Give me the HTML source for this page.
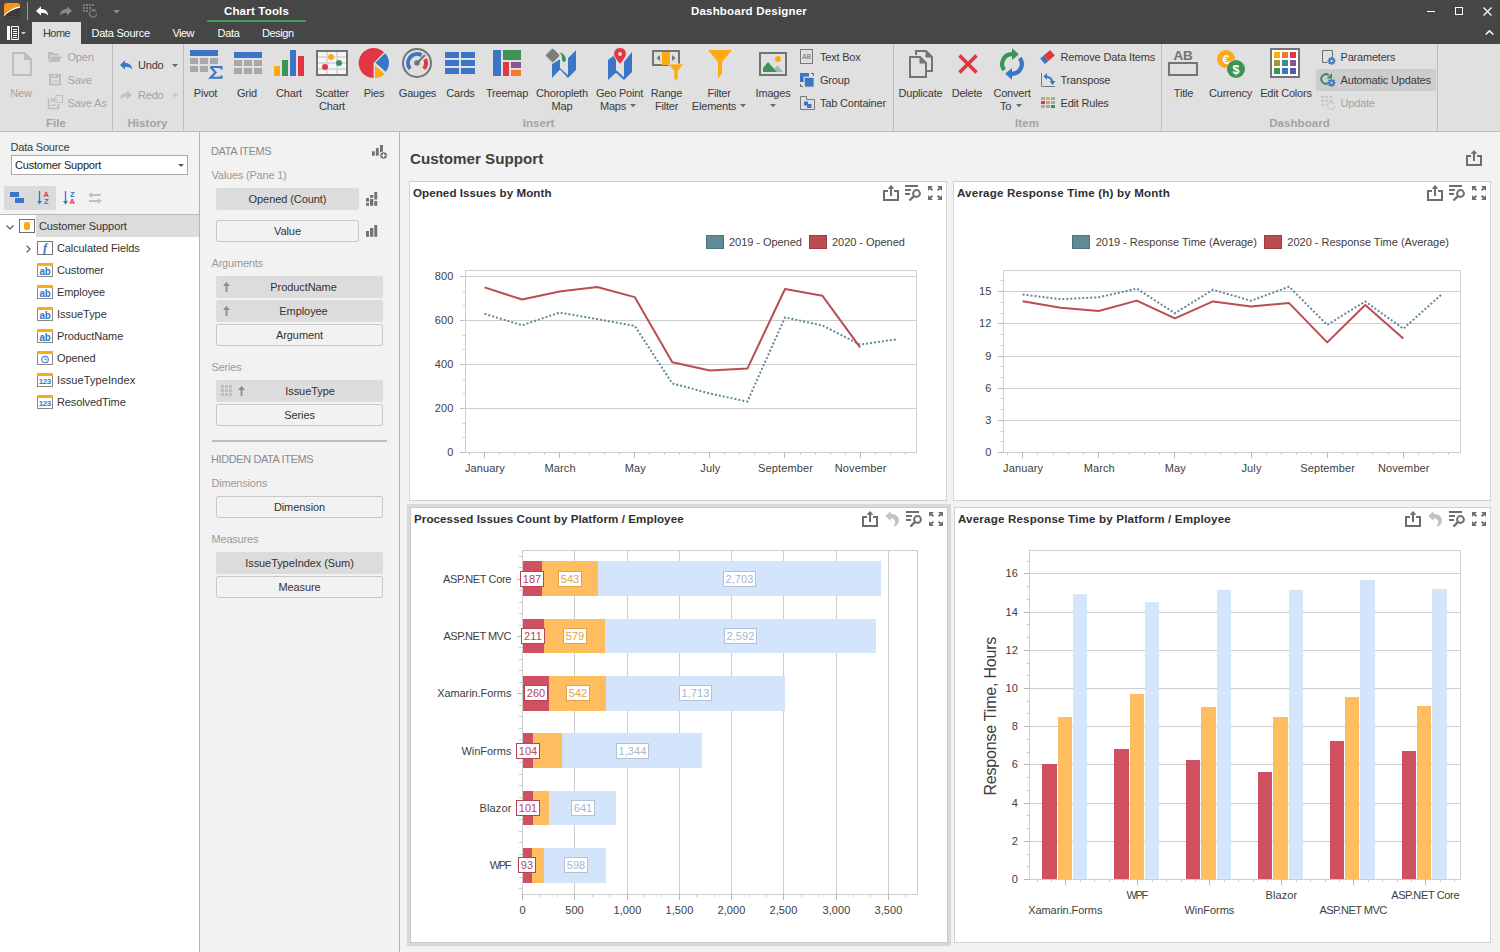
<!DOCTYPE html>
<html><head><meta charset="utf-8"><title>Dashboard Designer</title>
<style>
*{box-sizing:border-box;margin:0;padding:0}
html,body{width:1500px;height:952px;overflow:hidden;background:#f2f2f2}
body{font-family:"Liberation Sans",sans-serif;font-size:11px;color:#3a3a3a;position:relative;letter-spacing:-0.2px}
.a{position:absolute}
.t{position:absolute;white-space:nowrap;line-height:14px;height:14px}
.c{text-align:center}
.b{font-weight:bold;letter-spacing:0}
.w{color:#fff}
.dis{color:#a3a3a3}
.grp{position:absolute;white-space:nowrap;line-height:14px;height:14px;font-weight:bold;color:#a3a3a3;text-align:center;font-size:11.5px;letter-spacing:0.05px}
.sep{position:absolute;width:1px;background:#bdbdbd;top:44px;height:87px}
svg{position:absolute;overflow:visible}
.lbl{position:absolute;white-space:nowrap;line-height:13px;text-align:center;color:#3a3a3a}
.lbl.dis{color:#a3a3a3}
.di{position:absolute;height:22px;border-radius:2px;text-align:center;line-height:21px;color:#333;letter-spacing:-0.08px}
.di.f{background:#dcdcdc;line-height:23px}
.di.e{background:#f2f2f2;border:1px solid #c8c8c8;line-height:20px}
.sec{position:absolute;white-space:nowrap;color:#9a9a9a;line-height:14px}
.tr{position:absolute;white-space:nowrap;line-height:14px;color:#333;letter-spacing:-0.1px}
.pt{position:absolute;white-space:nowrap;font-weight:bold;color:#2f2f2f;line-height:14px;font-size:11.6px;letter-spacing:0.08px}
.panel{position:absolute;background:#fff;border:1px solid #d2d2d2}
.ax{font-family:"Liberation Sans",sans-serif;font-size:11px;fill:#404040;letter-spacing:0.12px}
</style></head><body>
<div class="a" style="left:0;top:0;width:1500px;height:44px;background:#464646"></div>
<svg style="left:4px;top:3px" width="16" height="16" viewBox="0 0 16 16">
<defs><clipPath id="ic"><rect x="0" y="0" width="16" height="16" rx="2.5"/></clipPath></defs>
<g clip-path="url(#ic)"><rect width="16" height="16" fill="#3b3b3b"/>
<path d="M0 0H16V3.2C9 4.5 3 8 0 12.2Z" fill="#f7941d"/>
<path d="M0 12.2C3 8 9 4.5 16 3.2V4.8C9.5 6 3.5 9.3 0 13.6Z" fill="#fff"/>
<rect x="1.5" y="13.2" width="13" height="1.2" fill="#4a4a4a"/></g></svg>
<div class="a" style="left:27px;top:2px;width:1px;height:18px;background:#9a9a9a"></div>
<svg style="left:36px;top:6px" width="12" height="10" viewBox="0 0 12 9.4"><path d="M0 4.6L5 0V2.8C9.5 2.8 12 5.2 12 9.4C10.8 7.2 8.8 6.4 5 6.4V9.2Z" fill="#fff"/></svg>
<svg style="left:60px;top:6px" width="12" height="10" viewBox="0 0 12 9.4"><path d="M0 4.6L5 0V2.8C9.5 2.8 12 5.2 12 9.4C10.8 7.2 8.8 6.4 5 6.4V9.2Z" fill="#8a8a8a" transform="translate(12,0) scale(-1,1)"/></svg>
<svg style="left:83px;top:4px" width="15" height="14" viewBox="0 0 15 14"><rect x="0" y="0" width="2" height="2" fill="#7d7d7d"/><rect x="3" y="0" width="2" height="2" fill="#7d7d7d"/><rect x="6" y="0" width="2" height="2" fill="#7d7d7d"/><rect x="9" y="0" width="2" height="2" fill="#7d7d7d"/><rect x="0" y="3" width="2" height="2" fill="#7d7d7d"/><rect x="3" y="3" width="2" height="2" fill="#7d7d7d"/><rect x="6" y="3" width="2" height="2" fill="#7d7d7d"/><rect x="0" y="6" width="2" height="2" fill="#7d7d7d"/><rect x="3" y="6" width="2" height="2" fill="#7d7d7d"/><path d="M13.6 9.4A3.6 3.6 0 1 1 11.2 6.2" fill="none" stroke="#7d7d7d" stroke-width="1.3"/><path d="M10.2 4.4L13.6 6.2L10.8 8.4Z" fill="#7d7d7d"/></svg>
<svg style="left:113px;top:10px" width="7" height="4" viewBox="0 0 7 4"><path d="M0 0H7L3.5 3.5Z" fill="#8e8e8e"/></svg>
<div class="t b w c" style="left:207px;top:4px;width:99px;font-size:11.5px;letter-spacing:.2px">Chart Tools</div>
<div class="a" style="left:207px;top:20px;width:99px;height:2px;background:#3c9d5a"></div>
<div class="t b w c" style="left:649px;top:4px;width:200px;font-size:11.5px;letter-spacing:.2px">Dashboard Designer</div>
<div class="a" style="left:1427px;top:11px;width:8px;height:1px;background:#fff"></div>
<div class="a" style="left:1455px;top:7px;width:8px;height:8px;border:1px solid #fff"></div>
<svg style="left:1483px;top:7px" width="9" height="9" viewBox="0 0 9 9"><path d="M0.5 0.5L8.5 8.5M8.5 0.5L0.5 8.5" stroke="#fff" stroke-width="1.2" fill="none"/></svg>
<svg style="left:1485px;top:30px" width="9" height="5" viewBox="0 0 9 5"><path d="M0.7 4.5L4.5 0.9L8.3 4.5" stroke="#fff" stroke-width="1.5" fill="none"/></svg>
<svg style="left:7px;top:26px" width="13" height="14" viewBox="0 0 13 14"><rect x="0" y="0" width="3" height="14" fill="#fff"/>
<path d="M4.5 0.5H11.5V13.5H4.5Z" fill="none" stroke="#fff" stroke-width="1"/>
<path d="M6 3.5H10M6 5.5H10M6 7.5H10M6 9.5H10M6 11.5H10" stroke="#fff" stroke-width="1" fill="none"/></svg>
<svg style="left:21px;top:32px" width="5" height="3" viewBox="0 0 5 3"><path d="M0 0H5L2.5 2.6Z" fill="#d0d0d0"/></svg>
<div class="a" style="left:32px;top:22px;width:49px;height:22px;background:#e0e0e0"></div>
<div class="t c" style="left:32px;top:26px;width:49px;color:#3a3a3a;letter-spacing:-0.55px">Home</div>
<div class="t w" style="left:91.5px;top:26px;letter-spacing:-0.26px">Data Source</div>
<div class="t w" style="left:172.5px;top:26px;letter-spacing:-0.55px">View</div>
<div class="t w" style="left:217.6px;top:26px;letter-spacing:-0.3px">Data</div>
<div class="t w" style="left:262px;top:26px;letter-spacing:-0.42px">Design</div>
<div class="a" style="left:0;top:44px;width:1500px;height:87px;background:#e0e0e0"></div>
<div class="a" style="left:0;top:131px;width:1500px;height:1px;background:#bcbcbc"></div>
<div class="sep" style="left:112px"></div>
<div class="sep" style="left:183px"></div>
<div class="sep" style="left:893px"></div>
<div class="sep" style="left:1161px"></div>
<div class="sep" style="left:1437px"></div>
<div class="grp" style="left:6px;top:116px;width:100px">File</div>
<div class="grp" style="left:97.5px;top:116px;width:100px">History</div>
<div class="grp" style="left:488.5px;top:116px;width:100px">Insert</div>
<div class="grp" style="left:977px;top:116px;width:100px">Item</div>
<div class="grp" style="left:1249.5px;top:116px;width:100px">Dashboard</div>
<svg style="left:12px;top:52px" width="20" height="24" viewBox="0 0 20 24"><path d="M1 1H12.5L19 7.5V23H1Z" fill="none" stroke="#bdbdbd" stroke-width="2"/><path d="M12 1V8H19" fill="#bdbdbd"/></svg>
<div class="lbl dis" style="left:-29px;top:87px;width:100px">New</div>
<svg style="left:48px;top:52px" width="14" height="10" viewBox="0 0 14 10"><path d="M0 0H4.5L6 1.5H11V3.5H2.8L0 9.5Z" fill="#bdbdbd"/><path d="M3.4 4.5H14L11 10H0.6Z" fill="#bdbdbd"/></svg>
<div class="t dis" style="left:67.5px;top:50px">Open</div>
<svg style="left:49px;top:74px" width="12" height="12" viewBox="0 0 12 12"><path d="M1 1H11V10.5H1Z" fill="none" stroke="#bdbdbd" stroke-width="2"/><rect x="3" y="0" width="6" height="4" fill="#bdbdbd"/><rect x="4.5" y="1" width="2" height="2" fill="#e0e0e0"/><rect x="3" y="6.5" width="6" height="1.2" fill="#bdbdbd"/></svg>
<div class="t dis" style="left:67.5px;top:73px">Save</div>
<svg style="left:48px;top:95px" width="15" height="14" viewBox="0 0 15 14"><path d="M0.5 3.5V13.5H10.5V9" fill="none" stroke="#bdbdbd" stroke-width="1.6"/><rect x="3" y="3" width="4" height="3.6" fill="#bdbdbd"/><rect x="4" y="4" width="1.6" height="1.6" fill="#e0e0e0"/><rect x="2.4" y="9.6" width="6" height="1.2" fill="#bdbdbd"/><rect x="8" y="0.5" width="6.5" height="7" fill="none" stroke="#bdbdbd" stroke-width="1"/></svg>
<div class="t dis" style="left:67.5px;top:96px">Save As</div>
<svg style="left:120px;top:60px" width="12" height="10" viewBox="0 0 12 9.4"><path d="M0 4.6L5 0V2.8C9.5 2.8 12 5.2 12 9.4C10.8 7.2 8.8 6.4 5 6.4V9.2Z" fill="#3a76c5"/></svg>
<div class="t" style="left:138px;top:58px">Undo</div>
<svg style="left:172px;top:64.3px" width="6" height="3.2" viewBox="0 0 6 3.2"><path d="M0 0H6L3 3.2Z" fill="#6a6a6a"/></svg>
<svg style="left:120px;top:90px" width="12" height="10" viewBox="0 0 12 9.4"><path d="M0 4.6L5 0V2.8C9.5 2.8 12 5.2 12 9.4C10.8 7.2 8.8 6.4 5 6.4V9.2Z" fill="#c0c0c0" transform="translate(12,0) scale(-1,1)"/></svg>
<div class="t dis" style="left:138px;top:88px">Redo</div>
<svg style="left:172px;top:94.3px" width="6" height="3.2" viewBox="0 0 6 3.2"><path d="M0 0H6L3 3.2Z" fill="#c2c2c2"/></svg>
<svg style="left:190px;top:48px" width="32" height="32" viewBox="0 0 32 32"><rect x="0" y="2" width="28" height="6" fill="#3a76c5" /><rect x="0" y="10" width="8" height="6" fill="#a9a9a9" /><rect x="10" y="10" width="8" height="6" fill="#a9a9a9" /><rect x="20" y="10" width="8" height="6" fill="#a9a9a9" /><rect x="0" y="18" width="8" height="6" fill="#a9a9a9" /><rect x="10" y="18" width="8" height="6" fill="#a9a9a9" /><path d="M20.5 19H31.5V21.4M31.5 27.6V29.8H20.5L25.6 24.4L20.5 19" fill="none" stroke="#3a76c5" stroke-width="2.1" stroke-linejoin="miter"/></svg>
<div class="lbl" style="left:155.5px;top:87px;width:100px">Pivot</div>
<svg style="left:234px;top:48px" width="32" height="32" viewBox="0 0 32 32"><rect x="0" y="4" width="28" height="6" fill="#3a76c5" /><rect x="0" y="12" width="8" height="6" fill="#a9a9a9" /><rect x="10" y="12" width="8" height="6" fill="#a9a9a9" /><rect x="20" y="12" width="8" height="6" fill="#a9a9a9" /><rect x="0" y="20" width="8" height="6" fill="#a9a9a9" /><rect x="10" y="20" width="8" height="6" fill="#a9a9a9" /><rect x="20" y="20" width="8" height="6" fill="#a9a9a9" /></svg>
<div class="lbl" style="left:197px;top:87px;width:100px">Grid</div>
<svg style="left:274px;top:48px" width="32" height="32" viewBox="0 0 32 32"><rect x="0" y="18" width="6" height="10" fill="#ffaa10" /><rect x="8" y="12" width="6" height="16" fill="#3c9359" /><rect x="16" y="2" width="6" height="26" fill="#3a76c5" /><rect x="24" y="8" width="6" height="20" fill="#e23645" /></svg>
<div class="lbl" style="left:239px;top:87px;width:100px">Chart</div>
<svg style="left:316px;top:48px" width="32" height="32" viewBox="0 0 32 32"><rect x="1" y="3" width="30" height="24" fill="#f5f5f5" /><rect x="2" y="8.1" width="28" height="1.8" fill="#d8d8d8" /><rect x="2" y="14.1" width="28" height="1.8" fill="#d8d8d8" /><rect x="2" y="20.1" width="28" height="1.8" fill="#d8d8d8" /><rect x="10.1" y="4" width="1.8" height="22" fill="#d8d8d8" /><rect x="20.1" y="4" width="1.8" height="22" fill="#d8d8d8" /><rect x="1" y="3" width="30" height="24" fill="none" stroke="#737373" stroke-width="2"/><circle cx="15" cy="9" r="3" fill="#ffaa10"/><circle cx="23" cy="15" r="3" fill="#3c9359"/><circle cx="9" cy="19" r="3" fill="#e23645"/></svg>
<div class="lbl" style="left:282px;top:87px;width:100px">Scatter</div><div class="lbl" style="left:282px;top:100px;width:100px">Chart</div>
<svg style="left:359px;top:48px" width="32" height="32" viewBox="0 0 32 32"><path d="M14.6 15L14.60 30.00A15 15 0 1 1 25.02 4.21Z" fill="#e23645"/><path d="M16.4 14.8L26.02 5.18A13.6 13.6 0 0 1 26.66 23.72Z" fill="#3a76c5"/><path d="M16 17.2L25.36 25.93A12.8 12.8 0 0 1 16.00 30.00Z" fill="#ffaa10"/></svg>
<div class="lbl" style="left:324px;top:87px;width:100px">Pies</div>
<svg style="left:402px;top:48px" width="32" height="32" viewBox="0 0 32 32"><circle cx="15" cy="15" r="14" fill="none" stroke="#737373" stroke-width="2"/><path d="M8.11 20.79A9 9 0 0 1 19.50 7.21" fill="none" stroke="#3a76c5" stroke-width="4"/><path d="M23.16 11.20A9 9 0 0 1 21.89 20.79" fill="none" stroke="#e23645" stroke-width="4"/><path d="M15 15L23 7" stroke="#737373" stroke-width="2"/><circle cx="15" cy="15" r="2.8" fill="#737373"/></svg>
<div class="lbl" style="left:367.5px;top:87px;width:100px">Gauges</div>
<svg style="left:445px;top:48px" width="32" height="32" viewBox="0 0 32 32"><rect x="0" y="4" width="14" height="6" fill="#3a76c5" /><rect x="16" y="4" width="14" height="6" fill="#3a76c5" /><rect x="0" y="12" width="14" height="6" fill="#3a76c5" /><rect x="16" y="12" width="14" height="6" fill="#3a76c5" /><rect x="0" y="20" width="14" height="6" fill="#3a76c5" /><rect x="16" y="20" width="14" height="6" fill="#3a76c5" /></svg>
<div class="lbl" style="left:410.5px;top:87px;width:100px">Cards</div>
<svg style="left:493px;top:48px" width="32" height="32" viewBox="0 0 32 32"><rect x="0" y="2" width="8" height="26" fill="#3a76c5" /><rect x="10" y="2" width="18" height="10" fill="#3c9359" /><rect x="10" y="14" width="6" height="14" fill="#e23645" /><rect x="18" y="14" width="10" height="6" fill="#8d5392" /><rect x="18" y="22" width="10" height="6" fill="#f27a2c" /></svg>
<div class="lbl" style="left:457px;top:87px;width:100px">Treemap</div>
<svg style="left:546px;top:48px" width="32" height="32" viewBox="0 0 32 32"><path d="M6 16L14 11.3V20L22 27.3V10.3L30 2.3V22L22 30V30L14 21.5L6 30Z" fill="#3a76c5"/><path d="M14 11.3V18.6L22 25.6V10.3" fill="#e0e0e0"/><path d="M5.4 0.9Q6.7 -0.4 8 0.9L13.3 6.2Q14.5 7.4 13.3 8.6L8 13.9Q6.7 15.2 5.4 13.9L0.1 8.6Q-1.1 7.4 0.1 6.2Z" fill="#7d7d7d" stroke="#e0e0e0" stroke-width="1"/><path d="M13.2 4.2C17.5 5 20.4 8.6 19.8 12.6C19.4 14.4 16.8 14.4 16.2 12.6C15.8 10.6 16.6 7 13.2 4.2Z" fill="#3c9359"/></svg>
<div class="lbl" style="left:512px;top:87px;width:100px">Choropleth</div><div class="lbl" style="left:512px;top:100px;width:100px">Map</div>
<svg style="left:608px;top:48px" width="24" height="32" viewBox="0 0 24 32"><path d="M0 12L8 6V22L16 29.3V14L24 4V24L16 32L8 24.7L0 32Z" fill="#3a76c5"/><path d="M8 6V20.4L16 27.6V14" fill="#e0e0e0"/><path d="M12 -0.4C8.4 -0.4 5.7 2.4 5.7 5.9C5.7 9.8 12 16.2 12 16.2C12 16.2 18.3 9.8 18.3 5.9C18.3 2.4 15.6 -0.4 12 -0.4Z" fill="#e23645" stroke="#e0e0e0" stroke-width="1"/><circle cx="12" cy="6" r="2" fill="#e0e0e0"/></svg>
<div class="lbl" style="left:569.5px;top:87px;width:100px">Geo Point</div>
<div class="lbl" style="left:563px;top:100px;width:100px">Maps</div>
<svg style="left:630px;top:104.3px" width="6" height="3.2" viewBox="0 0 6 3.2"><path d="M0 0H6L3 3.2Z" fill="#6a6a6a"/></svg>
<svg style="left:652px;top:48px" width="32" height="32" viewBox="0 0 32 32"><rect x="1" y="3" width="26" height="14" fill="none" stroke="#737373" stroke-width="2"/><rect x="10" y="4" width="8" height="13" fill="#ffaa10" /><path d="M8 7V13L4.5 10Z" fill="#737373"/><path d="M20 7V13L23.5 10Z" fill="#737373"/><path d="M16 16H32L26 23V32H22V23Z" fill="#ffaa10" stroke="#e0e0e0" stroke-width="0.8"/></svg>
<div class="lbl" style="left:616.5px;top:87px;width:100px">Range</div><div class="lbl" style="left:616.5px;top:100px;width:100px">Filter</div>
<svg style="left:708px;top:48px" width="24" height="32" viewBox="0 0 24 32"><path d="M0 2H24L14 14V26L10 30V14Z" fill="#ffaa10"/></svg>
<div class="lbl" style="left:669px;top:87px;width:100px">Filter</div>
<div class="lbl" style="left:664px;top:100px;width:100px">Elements</div>
<svg style="left:740px;top:104.3px" width="6" height="3.2" viewBox="0 0 6 3.2"><path d="M0 0H6L3 3.2Z" fill="#6a6a6a"/></svg>
<svg style="left:759px;top:48px" width="32" height="32" viewBox="0 0 32 32"><rect x="1" y="5" width="26" height="22" fill="none" stroke="#737373" stroke-width="2"/><path d="M4 24V20L9 14L18 24Z" fill="#3c9359"/><path d="M15 21L18.5 17.5L24 24H18Z" fill="#8fc3a0"/><circle cx="19" cy="11" r="3" fill="#ffaa10"/></svg>
<div class="lbl" style="left:723px;top:87px;width:100px">Images</div>
<svg style="left:770px;top:104.3px" width="6" height="3.2" viewBox="0 0 6 3.2"><path d="M0 0H6L3 3.2Z" fill="#6a6a6a"/></svg>
<svg style="left:800px;top:49px" width="14" height="15" viewBox="0 0 14 15"><rect x="0.5" y="0.5" width="12" height="14" fill="none" stroke="#7a7a7a"/><text x="6.6" y="10" font-family="Liberation Sans,sans-serif" font-size="6.5" font-weight="bold" fill="#8a8a8a" text-anchor="middle">AB</text></svg>
<div class="t" style="left:820px;top:50px">Text Box</div>
<svg style="left:800px;top:73px" width="14" height="14" viewBox="0 0 14 14"><rect x="0" y="0" width="9" height="9" fill="#3a76c5" /><rect x="4.2" y="4.2" width="10" height="10" fill="#3a76c5" stroke="#e0e0e0" stroke-width="1.2"/><path d="M11 0.5H13.5V3M0.5 11V13.5H3" fill="none" stroke="#666" stroke-width="1"/></svg>
<div class="t" style="left:820px;top:73px">Group</div>
<svg style="left:800px;top:96px" width="15" height="14" viewBox="0 0 15 14"><path d="M0.5 0.5H6.5V3.5H14.5V13.5H0.5Z" fill="none" stroke="#7a7a7a"/><rect x="4" y="5.5" width="4" height="4" fill="#3a76c5" /><rect x="7" y="8" width="4.5" height="4" fill="#3a76c5" /></svg>
<div class="t" style="left:820px;top:96px">Tab Container</div>
<svg style="left:909px;top:48px" width="24" height="32" viewBox="0 0 24 32"><path d="M7 7V3H17L23 9V23H17" fill="none" stroke="#737373" stroke-width="2"/><path d="M16.5 3.5V9.5H22.5Z" fill="#737373"/><path d="M1 9H11L17 15V29H1Z" fill="#e0e0e0" stroke="#737373" stroke-width="2"/><path d="M10.5 9.5V15.5H16.5Z" fill="#737373"/></svg>
<div class="lbl" style="left:870.5px;top:87px;width:100px">Duplicate</div>
<svg style="left:958px;top:54px" width="20" height="20" viewBox="0 0 20 20"><path d="M1.5 1.5L18.5 18.5M18.5 1.5L1.5 18.5" stroke="#e23645" stroke-width="3.6" fill="none"/></svg>
<div class="lbl" style="left:917px;top:87px;width:100px">Delete</div>
<svg style="left:1000px;top:48px" width="24" height="32" viewBox="0 0 24 32"><path d="M4.17 21.90A9.8 9.8 0 0 1 12.34 6.21" fill="none" stroke="#3c9359" stroke-width="4.2"/><path d="M12 0.3L18.8 6.2L12 12.1Z" fill="#3c9359"/><path d="M19.83 10.10A9.8 9.8 0 0 1 11.66 25.79" fill="none" stroke="#3a76c5" stroke-width="4.2"/><path d="M12 19.9L5.2 25.8L12 31.7Z" fill="#3a76c5"/></svg>
<div class="lbl" style="left:962px;top:87px;width:100px">Convert</div>
<div class="lbl" style="left:955.5px;top:100px;width:100px">To</div>
<svg style="left:1016.3px;top:104.3px" width="6" height="3.2" viewBox="0 0 6 3.2"><path d="M0 0H6L3 3.2Z" fill="#6a6a6a"/></svg>
<svg style="left:1041px;top:50px" width="14" height="14" viewBox="0 0 14 14"><g transform="rotate(-40 6.5 7)"><rect x="0" y="3.4" width="4.6" height="7.2" fill="#3a76c5"/><rect x="4.6" y="3.4" width="8.4" height="7.2" fill="#e23645"/></g></svg>
<div class="t" style="left:1060.5px;top:50px;letter-spacing:-0.15px">Remove Data Items</div>
<svg style="left:1041px;top:73px" width="15" height="14" viewBox="0 0 15 14"><path d="M0.5 0V13.5H14" fill="none" stroke="#7a7a7a"/><path d="M4 3.5C8 3.5 10.5 5 11.5 9" fill="none" stroke="#3a76c5" stroke-width="1.8"/><path d="M6 0L2.5 3.5L6 7Z" fill="#3a76c5"/><path d="M8.5 8H14.5L11.5 12Z" fill="#3a76c5"/></svg>
<div class="t" style="left:1060.5px;top:73px">Transpose</div>
<svg style="left:1041px;top:97px" width="14" height="11" viewBox="0 0 14 11"><rect x="0" y="0" width="4" height="3" fill="#a9a9a9" /><rect x="5" y="0" width="4" height="3" fill="#ffaa10" /><rect x="10" y="0" width="4" height="3" fill="#a9a9a9" /><rect x="0" y="4" width="4" height="3" fill="#e23645" /><rect x="5" y="4" width="4" height="3" fill="#a9a9a9" /><rect x="10" y="4" width="4" height="3" fill="#a9a9a9" /><rect x="0" y="8" width="4" height="3" fill="#a9a9a9" /><rect x="5" y="8" width="4" height="3" fill="#a9a9a9" /><rect x="10" y="8" width="4" height="3" fill="#3c9359" /></svg>
<div class="t" style="left:1060.5px;top:96px">Edit Rules</div>
<svg style="left:1168px;top:48px" width="32" height="32" viewBox="0 0 32 32"><text x="15" y="11.5" font-family="Liberation Sans,sans-serif" font-size="13.5" font-weight="bold" fill="#737373" text-anchor="middle">AB</text><rect x="1" y="15" width="28" height="12" fill="none" stroke="#737373" stroke-width="2"/></svg>
<div class="lbl" style="left:1133.5px;top:87px;width:100px">Title</div>
<svg style="left:1217px;top:48px" width="32" height="32" viewBox="0 0 32 32"><circle cx="9" cy="11" r="9" fill="#ffaa10"/><text x="9" y="15.5" font-family="Liberation Sans,sans-serif" font-size="12.5" font-weight="bold" fill="#fff" text-anchor="middle">€</text><circle cx="19" cy="21" r="9.6" fill="#e0e0e0"/><circle cx="19" cy="21" r="9" fill="#3c9359"/><text x="19" y="25.6" font-family="Liberation Sans,sans-serif" font-size="12.5" font-weight="bold" fill="#fff" text-anchor="middle">$</text></svg>
<div class="lbl" style="left:1180.5px;top:87px;width:100px">Currency</div>
<svg style="left:1270px;top:48px" width="32" height="32" viewBox="0 0 32 32"><rect x="1" y="1" width="28" height="28" fill="#fff" /><rect x="1" y="1" width="28" height="28" fill="none" stroke="#737373" stroke-width="2"/><rect x="4" y="4" width="6" height="6" fill="#ffaa10" /><rect x="12" y="4" width="6" height="6" fill="#f27a2c" /><rect x="20" y="4" width="6" height="6" fill="#e23645" /><rect x="4" y="12" width="6" height="6" fill="#9a9a2e" /><rect x="12" y="12" width="6" height="6" fill="#3f8b8b" /><rect x="20" y="12" width="6" height="6" fill="#8d5392" /><rect x="4" y="20" width="6" height="6" fill="#3c9359" /><rect x="12" y="20" width="6" height="6" fill="#3a76c5" /><rect x="20" y="20" width="6" height="6" fill="#5a5aa8" /></svg>
<div class="lbl" style="left:1236px;top:87px;width:100px">Edit Colors</div>
<div class="a" style="left:1316px;top:69px;width:120px;height:22px;background:#cdcdcd"></div>
<svg style="left:1321.5px;top:50px" width="15" height="15" viewBox="0 0 15 15"><path d="M10.5 7.5V0.5H0.5V12.5H5.5" fill="none" stroke="#6e6e6e"/><line x1="11.4" y1="10.9" x2="13.6" y2="10.9" stroke="#3a76c5" stroke-width="1.7"/><line x1="10.8728" y1="12.1728" x2="12.4284" y2="13.7284" stroke="#3a76c5" stroke-width="1.7"/><line x1="9.6" y1="12.7" x2="9.6" y2="14.9" stroke="#3a76c5" stroke-width="1.7"/><line x1="8.32721" y1="12.1728" x2="6.77157" y2="13.7284" stroke="#3a76c5" stroke-width="1.7"/><line x1="7.8" y1="10.9" x2="5.6" y2="10.9" stroke="#3a76c5" stroke-width="1.7"/><line x1="8.32721" y1="9.62721" x2="6.77157" y2="8.07157" stroke="#3a76c5" stroke-width="1.7"/><line x1="9.6" y1="9.1" x2="9.6" y2="6.9" stroke="#3a76c5" stroke-width="1.7"/><line x1="10.8728" y1="9.62721" x2="12.4284" y2="8.07157" stroke="#3a76c5" stroke-width="1.7"/><circle cx="9.6" cy="10.9" r="2.7" fill="#3a76c5"/><circle cx="9.6" cy="10.9" r="1.2" fill="#e0e0e0"/></svg>
<div class="t" style="left:1340.5px;top:50px">Parameters</div>
<svg style="left:1320px;top:72px" width="16" height="16" viewBox="0 0 16 16"><path d="M8.21 11.15A4.7 4.7 0 1 1 8.70 3.15" fill="none" stroke="#3c9359" stroke-width="2"/><path d="M12 1V6.6H6.6Z" fill="#3c9359"/><line x1="13.3" y1="10.8" x2="15.5" y2="10.8" stroke="#3a76c5" stroke-width="1.7"/><line x1="12.7728" y1="12.0728" x2="14.3284" y2="13.6284" stroke="#3a76c5" stroke-width="1.7"/><line x1="11.5" y1="12.6" x2="11.5" y2="14.8" stroke="#3a76c5" stroke-width="1.7"/><line x1="10.2272" y1="12.0728" x2="8.67157" y2="13.6284" stroke="#3a76c5" stroke-width="1.7"/><line x1="9.7" y1="10.8" x2="7.5" y2="10.8" stroke="#3a76c5" stroke-width="1.7"/><line x1="10.2272" y1="9.52721" x2="8.67157" y2="7.97157" stroke="#3a76c5" stroke-width="1.7"/><line x1="11.5" y1="9" x2="11.5" y2="6.8" stroke="#3a76c5" stroke-width="1.7"/><line x1="12.7728" y1="9.52721" x2="14.3284" y2="7.97157" stroke="#3a76c5" stroke-width="1.7"/><circle cx="11.5" cy="10.8" r="2.7" fill="#3a76c5"/><circle cx="11.5" cy="10.8" r="1.2" fill="#cdcdcd"/></svg>
<div class="t" style="left:1340.5px;top:73px;letter-spacing:-0.15px">Automatic Updates</div>
<svg style="left:1321px;top:96px" width="15" height="14" viewBox="0 0 15 14"><rect x="0" y="0" width="2.8" height="2" fill="#c6c6c6" /><rect x="4.2" y="0" width="2.8" height="2" fill="#c6c6c6" /><rect x="8.4" y="0" width="2.8" height="2" fill="#c6c6c6" /><rect x="0" y="3.8" width="2.8" height="2" fill="#c6c6c6" /><rect x="4.2" y="3.8" width="2.8" height="2" fill="#c6c6c6" /><rect x="8.4" y="3.8" width="2.8" height="2" fill="#c6c6c6" /><rect x="0" y="7.6" width="2.8" height="2" fill="#c6c6c6" /><rect x="4.2" y="7.6" width="1.2" height="2" fill="#c6c6c6" /><path d="M13.6 9.8A3.5 3.5 0 1 1 11.4 6.5" fill="none" stroke="#c6c6c6" stroke-width="1.1"/><path d="M10.6 4.9L13.8 6.4L11.2 8.6Z" fill="#c6c6c6"/></svg>
<div class="t dis" style="left:1340.5px;top:96px">Update</div>
<div class="a" style="left:0;top:215px;width:199px;height:737px;background:#fff"></div>
<div class="a" style="left:0;top:214px;width:199px;height:1px;background:#b9b9b9"></div>
<div class="a" style="left:199px;top:132px;width:1px;height:820px;background:#b4b4b4"></div>
<div class="a" style="left:399px;top:132px;width:1px;height:820px;background:#b4b4b4"></div>
<div class="t" style="left:10.5px;top:140px">Data Source</div>
<div class="a" style="left:11px;top:155px;width:177px;height:20px;background:#fff;border:1px solid #ababab"></div>
<div class="t" style="left:15px;top:158px;color:#222">Customer Support</div>
<svg style="left:178px;top:164px" width="6" height="3" viewBox="0 0 6 3"><path d="M0 0H6L3 3Z" fill="#5a5a5a"/></svg>
<div class="a" style="left:4px;top:186px;width:52px;height:24px;background:#dadada"></div>
<svg style="left:10px;top:192px" width="14" height="11" viewBox="0 0 14 11"><rect x="0" y="0" width="9" height="5" fill="#3a76c5" /><rect x="5" y="6" width="9" height="5" fill="#3a76c5" /></svg>
<svg style="left:37px;top:191px" width="13" height="14" viewBox="0 0 13 14"><path d="M2.5 0V12" stroke="#3a76c5" stroke-width="1.3"/><path d="M0 10H5L2.5 13.5Z" fill="#3a76c5"/><text x="9.2" y="6" font-family="Liberation Sans,sans-serif" font-size="7.5" font-weight="bold" fill="#e23645" text-anchor="middle">A</text><text x="9.2" y="13.4" font-family="Liberation Sans,sans-serif" font-size="7.5" font-weight="bold" fill="#3a76c5" text-anchor="middle">Z</text></svg>
<svg style="left:62.8px;top:191px" width="13" height="14" viewBox="0 0 13 14"><path d="M2.5 0V12" stroke="#3a76c5" stroke-width="1.3"/><path d="M0 10H5L2.5 13.5Z" fill="#3a76c5"/><text x="9.2" y="6" font-family="Liberation Sans,sans-serif" font-size="7.5" font-weight="bold" fill="#3a76c5" text-anchor="middle">Z</text><text x="9.2" y="13.4" font-family="Liberation Sans,sans-serif" font-size="7.5" font-weight="bold" fill="#e23645" text-anchor="middle">A</text></svg>
<svg style="left:88px;top:192px" width="14" height="12" viewBox="0 0 14 12"><path d="M3 3H13" stroke="#c0c0c0" stroke-width="2"/><path d="M4.2 0L0 3L4.2 6Z" fill="#c2c2c2"/><path d="M1 9H11" stroke="#c0c0c0" stroke-width="2"/><path d="M9.8 6L14 9L9.8 12Z" fill="#c2c2c2"/></svg>
<div class="a" style="left:36px;top:215px;width:163px;height:22px;background:#dcdcdc"></div>
<svg style="left:5.5px;top:225px" width="8" height="5" viewBox="0 0 8 5"><path d="M0.5 0.5L4 4L7.5 0.5" fill="none" stroke="#555" stroke-width="1.2"/></svg>
<svg style="left:19px;top:219px" width="16" height="14" viewBox="0 0 16 14"><rect x="0.5" y="0.5" width="15" height="13" fill="#fff" stroke="#6f6f6f"/><rect x="5" y="3" width="6" height="8" rx="2" fill="#ffaa10"/></svg>
<div class="tr" style="left:39px;top:219px">Customer Support</div>
<svg style="left:25.5px;top:244.5px" width="5" height="8" viewBox="0 0 5 8"><path d="M0.6 0.6L4 4L0.6 7.4" fill="none" stroke="#555" stroke-width="1.2"/></svg>
<svg style="left:37px;top:241px" width="16" height="14" viewBox="0 0 16 14"><rect x="0.5" y="0.5" width="15" height="13" fill="#fff" stroke="#777"/><text x="8" y="11" font-family="Liberation Serif,serif" font-style="italic" font-weight="bold" font-size="12.5" fill="#3a76c5" text-anchor="middle">f</text></svg>
<div class="tr" style="left:57px;top:241px">Calculated Fields</div>
<svg style="left:37px;top:263px" width="16" height="14" viewBox="0 0 16 14"><rect x="0.5" y="0.5" width="15" height="13" fill="#fff" stroke="#8a8a8a"/><rect x="0" y="0" width="16" height="3" fill="#ffaa10"/><text x="8" y="11.6" font-family="Liberation Mono,monospace" font-weight="bold" font-size="10" fill="#3a76c5" text-anchor="middle" textLength="11.5" letter-spacing="0">ab</text></svg>
<div class="tr" style="left:57px;top:263px">Customer</div>
<svg style="left:37px;top:285px" width="16" height="14" viewBox="0 0 16 14"><rect x="0.5" y="0.5" width="15" height="13" fill="#fff" stroke="#8a8a8a"/><rect x="0" y="0" width="16" height="3" fill="#ffaa10"/><text x="8" y="11.6" font-family="Liberation Mono,monospace" font-weight="bold" font-size="10" fill="#3a76c5" text-anchor="middle" textLength="11.5" letter-spacing="0">ab</text></svg>
<div class="tr" style="left:57px;top:285px">Employee</div>
<svg style="left:37px;top:307px" width="16" height="14" viewBox="0 0 16 14"><rect x="0.5" y="0.5" width="15" height="13" fill="#fff" stroke="#8a8a8a"/><rect x="0" y="0" width="16" height="3" fill="#ffaa10"/><text x="8" y="11.6" font-family="Liberation Mono,monospace" font-weight="bold" font-size="10" fill="#3a76c5" text-anchor="middle" textLength="11.5" letter-spacing="0">ab</text></svg>
<div class="tr" style="left:57px;top:307px;letter-spacing:-0.04px">IssueType</div>
<svg style="left:37px;top:329px" width="16" height="14" viewBox="0 0 16 14"><rect x="0.5" y="0.5" width="15" height="13" fill="#fff" stroke="#8a8a8a"/><rect x="0" y="0" width="16" height="3" fill="#ffaa10"/><text x="8" y="11.6" font-family="Liberation Mono,monospace" font-weight="bold" font-size="10" fill="#3a76c5" text-anchor="middle" textLength="11.5" letter-spacing="0">ab</text></svg>
<div class="tr" style="left:57px;top:329px">ProductName</div>
<svg style="left:37px;top:351px" width="16" height="14" viewBox="0 0 16 14"><rect x="0.5" y="0.5" width="15" height="13" fill="#fff" stroke="#8a8a8a"/><rect x="0" y="0" width="16" height="3" fill="#ffaa10"/><circle cx="8" cy="8.5" r="3.3" fill="none" stroke="#3a76c5" stroke-width="1.1"/><path d="M8 6.5V8.7H9.8" fill="none" stroke="#3a76c5" stroke-width="0.9"/></svg>
<div class="tr" style="left:57px;top:351px">Opened</div>
<svg style="left:37px;top:373px" width="16" height="14" viewBox="0 0 16 14"><rect x="0.5" y="0.5" width="15" height="13" fill="#fff" stroke="#8a8a8a"/><rect x="0" y="0" width="16" height="3" fill="#ffaa10"/><text x="8" y="11.2" font-family="Liberation Sans,sans-serif" font-weight="bold" font-size="8" fill="#3a76c5" text-anchor="middle" textLength="12.5" letter-spacing="0">123</text></svg>
<div class="tr" style="left:57px;top:373px;letter-spacing:0.09px">IssueTypeIndex</div>
<svg style="left:37px;top:395px" width="16" height="14" viewBox="0 0 16 14"><rect x="0.5" y="0.5" width="15" height="13" fill="#fff" stroke="#8a8a8a"/><rect x="0" y="0" width="16" height="3" fill="#ffaa10"/><text x="8" y="11.2" font-family="Liberation Sans,sans-serif" font-weight="bold" font-size="8" fill="#3a76c5" text-anchor="middle" textLength="12.5" letter-spacing="0">123</text></svg>
<div class="tr" style="left:57px;top:395px">ResolvedTime</div>
<div class="sec" style="left:211px;top:144px;color:#8a8a8a;letter-spacing:-0.35px">DATA ITEMS</div>
<svg style="left:372px;top:145px" width="15" height="14" viewBox="0 0 15 14"><rect x="0" y="6.3" width="2.8" height="4.4" fill="#737373" /><rect x="3.9" y="3" width="2.8" height="7.7" fill="#737373" /><rect x="8" y="0" width="3" height="7.4" fill="#737373" /><circle cx="11.6" cy="10.5" r="3.9" fill="#f2f2f2"/><circle cx="11.6" cy="10.5" r="3.3" fill="#737373"/><path d="M9.6 10.5H13.6M11.6 8.5V12.5" stroke="#fff" stroke-width="1.1"/></svg>
<div class="sec" style="left:211.5px;top:168px">Values (Pane 1)</div>
<div class="di f" style="left:216px;top:188px;width:143px">Opened (Count)</div>
<svg style="left:366px;top:192px" width="12" height="14" viewBox="0 0 12 14"><rect x="0" y="6" width="3" height="3.6" fill="#737373" /><rect x="0" y="10.9" width="3" height="2.9" fill="#737373" /><rect x="4" y="3" width="3.3" height="2.7" fill="#737373" /><rect x="4" y="6.9" width="3.3" height="6.9" fill="#737373" /><rect x="8.3" y="0" width="2.9" height="7.5" fill="#737373" /><rect x="8.3" y="9" width="2.9" height="4.8" fill="#737373" /></svg>
<div class="di e" style="left:216px;top:220px;width:143px">Value</div>
<svg style="left:366px;top:225px" width="12" height="12" viewBox="0 0 12 12"><rect x="0" y="6" width="3" height="5.8" fill="#737373" /><rect x="4" y="3" width="3.3" height="8.8" fill="#737373" /><rect x="8.3" y="0" width="2.9" height="11.8" fill="#737373" /></svg>
<div class="sec" style="left:211.5px;top:256px">Arguments</div>
<div class="di f" style="left:216px;top:276px;width:167px;padding-left:8px">ProductName</div>
<svg style="left:223px;top:282px" width="7" height="10" viewBox="0 0 7 10"><path d="M3.5 2V10" stroke="#8c8c8c" stroke-width="1.8"/><path d="M0 4L3.5 0L7 4Z" fill="#8c8c8c"/></svg>
<div class="di f" style="left:216px;top:300px;width:167px;padding-left:8px">Employee</div>
<svg style="left:223px;top:306px" width="7" height="10" viewBox="0 0 7 10"><path d="M3.5 2V10" stroke="#8c8c8c" stroke-width="1.8"/><path d="M0 4L3.5 0L7 4Z" fill="#8c8c8c"/></svg>
<div class="di e" style="left:216px;top:324px;width:167px">Argument</div>
<div class="sec" style="left:211.5px;top:360px">Series</div>
<div class="di f" style="left:216px;top:380px;width:167px;padding-left:21px">IssueType</div>
<svg style="left:221px;top:385px" width="11" height="11" viewBox="0 0 11 11"><rect x="0" y="0" width="3" height="3" fill="#bfbfbf" /><rect x="4" y="0" width="3" height="3" fill="#bfbfbf" /><rect x="8" y="0" width="3" height="3" fill="#bfbfbf" /><rect x="0" y="4" width="3" height="3" fill="#bfbfbf" /><rect x="4" y="4" width="3" height="3" fill="#bfbfbf" /><rect x="8" y="4" width="3" height="3" fill="#bfbfbf" /><rect x="0" y="8" width="3" height="3" fill="#bfbfbf" /><rect x="4" y="8" width="3" height="3" fill="#bfbfbf" /><rect x="8" y="8" width="3" height="3" fill="#bfbfbf" /></svg>
<svg style="left:238px;top:386px" width="7" height="10" viewBox="0 0 7 10"><path d="M3.5 2V10" stroke="#8c8c8c" stroke-width="1.8"/><path d="M0 4L3.5 0L7 4Z" fill="#8c8c8c"/></svg>
<div class="di e" style="left:216px;top:404px;width:167px">Series</div>
<div class="a" style="left:212px;top:440px;width:175px;height:2px;background:#bdbdbd"></div>
<div class="sec" style="left:211px;top:452px;color:#8a8a8a;letter-spacing:-0.4px">HIDDEN DATA ITEMS</div>
<div class="sec" style="left:211.5px;top:476px">Dimensions</div>
<div class="di e" style="left:216px;top:496px;width:167px">Dimension</div>
<div class="sec" style="left:211.5px;top:532px">Measures</div>
<div class="di f" style="left:216px;top:552px;width:167px">IssueTypeIndex (Sum)</div>
<div class="di e" style="left:216px;top:576px;width:167px">Measure</div>
<div class="t b" style="left:410px;top:150px;font-size:15.2px;line-height:18px;height:18px;color:#404040">Customer Support</div>
<svg style="left:1466px;top:150px" width="16" height="16" viewBox="0 0 16 16"><path d="M5 6H1V15H15V6H11" fill="none" stroke="#6e6e6e" stroke-width="2"/><path d="M8 2V11" stroke="#6e6e6e" stroke-width="2"/><path d="M4.6 3.8L8 0L11.4 3.8Z" fill="#6e6e6e"/></svg>
<div class="panel" style="left:409px;top:181px;width:538px;height:320px"></div>
<div class="panel" style="left:953px;top:181px;width:538px;height:320px"></div>
<div class="a" style="left:407px;top:504px;width:544px;height:442px;background:#d9d9d9"></div>
<div class="panel" style="left:410px;top:507px;width:538px;height:436px;border-color:#cbcbcb"></div>
<div class="panel" style="left:954px;top:507px;width:537px;height:436px"></div>
<div class="pt" style="left:413px;top:186px;letter-spacing:0.06px">Opened Issues by Month</div>
<div class="pt" style="left:957px;top:186px;letter-spacing:0.18px">Average Response Time (h) by Month</div>
<div class="pt" style="left:414px;top:512px">Processed Issues Count by Platform / Employee</div>
<div class="pt" style="left:958px;top:512px;letter-spacing:0.17px">Average Response Time by Platform / Employee</div>
<svg style="left:883px;top:185px" width="16" height="16" viewBox="0 0 16 16"><path d="M5 6H1V15H15V6H11" fill="none" stroke="#6e6e6e" stroke-width="2"/><path d="M8 2V11" stroke="#6e6e6e" stroke-width="2"/><path d="M4.6 3.8L8 0L11.4 3.8Z" fill="#6e6e6e"/></svg><svg style="left:905px;top:185px" width="16" height="16" viewBox="0 0 16 16"><path d="M0 1H13M0 5H6M0 9H5" stroke="#6e6e6e" stroke-width="2"/><circle cx="11.5" cy="8.5" r="3.4" fill="none" stroke="#6e6e6e" stroke-width="2"/><path d="M9 11L4.5 15.5" stroke="#6e6e6e" stroke-width="2.4"/></svg><svg style="left:928px;top:186px" width="14" height="14" viewBox="0 0 14 14"><path d="M0 0H5L0 5Z" fill="#6e6e6e"/><path d="M1.5 1.5L4.4 4.4" stroke="#6e6e6e" stroke-width="2"/><path d="M14 0H9L14 5Z" fill="#6e6e6e"/><path d="M12.5 1.5L9.6 4.4" stroke="#6e6e6e" stroke-width="2"/><path d="M0 14H5L0 9Z" fill="#6e6e6e"/><path d="M1.5 12.5L4.4 9.6" stroke="#6e6e6e" stroke-width="2"/><path d="M14 14H9L14 9Z" fill="#6e6e6e"/><path d="M12.5 12.5L9.6 9.6" stroke="#6e6e6e" stroke-width="2"/></svg>
<svg style="left:1427px;top:185px" width="16" height="16" viewBox="0 0 16 16"><path d="M5 6H1V15H15V6H11" fill="none" stroke="#6e6e6e" stroke-width="2"/><path d="M8 2V11" stroke="#6e6e6e" stroke-width="2"/><path d="M4.6 3.8L8 0L11.4 3.8Z" fill="#6e6e6e"/></svg><svg style="left:1449px;top:185px" width="16" height="16" viewBox="0 0 16 16"><path d="M0 1H13M0 5H6M0 9H5" stroke="#6e6e6e" stroke-width="2"/><circle cx="11.5" cy="8.5" r="3.4" fill="none" stroke="#6e6e6e" stroke-width="2"/><path d="M9 11L4.5 15.5" stroke="#6e6e6e" stroke-width="2.4"/></svg><svg style="left:1472px;top:186px" width="14" height="14" viewBox="0 0 14 14"><path d="M0 0H5L0 5Z" fill="#6e6e6e"/><path d="M1.5 1.5L4.4 4.4" stroke="#6e6e6e" stroke-width="2"/><path d="M14 0H9L14 5Z" fill="#6e6e6e"/><path d="M12.5 1.5L9.6 4.4" stroke="#6e6e6e" stroke-width="2"/><path d="M0 14H5L0 9Z" fill="#6e6e6e"/><path d="M1.5 12.5L4.4 9.6" stroke="#6e6e6e" stroke-width="2"/><path d="M14 14H9L14 9Z" fill="#6e6e6e"/><path d="M12.5 12.5L9.6 9.6" stroke="#6e6e6e" stroke-width="2"/></svg>
<svg style="left:862px;top:511px" width="16" height="16" viewBox="0 0 16 16"><path d="M5 6H1V15H15V6H11" fill="none" stroke="#6e6e6e" stroke-width="2"/><path d="M8 2V11" stroke="#6e6e6e" stroke-width="2"/><path d="M4.6 3.8L8 0L11.4 3.8Z" fill="#6e6e6e"/></svg><svg style="left:885px;top:511px" width="14" height="16" viewBox="0 0 14 16"><path d="M0.3 5L5.5 0V2.8C11 2.8 14 6 14 9.5C14 12.5 12 15 8.2 15.8C10 13.5 10.4 11 10 9.6C9.5 8 8 7.4 5.5 7.4V10Z" fill="#c3c3c3"/></svg><svg style="left:906px;top:511px" width="16" height="16" viewBox="0 0 16 16"><path d="M0 1H13M0 5H6M0 9H5" stroke="#6e6e6e" stroke-width="2"/><circle cx="11.5" cy="8.5" r="3.4" fill="none" stroke="#6e6e6e" stroke-width="2"/><path d="M9 11L4.5 15.5" stroke="#6e6e6e" stroke-width="2.4"/></svg><svg style="left:929px;top:512px" width="14" height="14" viewBox="0 0 14 14"><path d="M0 0H5L0 5Z" fill="#6e6e6e"/><path d="M1.5 1.5L4.4 4.4" stroke="#6e6e6e" stroke-width="2"/><path d="M14 0H9L14 5Z" fill="#6e6e6e"/><path d="M12.5 1.5L9.6 4.4" stroke="#6e6e6e" stroke-width="2"/><path d="M0 14H5L0 9Z" fill="#6e6e6e"/><path d="M1.5 12.5L4.4 9.6" stroke="#6e6e6e" stroke-width="2"/><path d="M14 14H9L14 9Z" fill="#6e6e6e"/><path d="M12.5 12.5L9.6 9.6" stroke="#6e6e6e" stroke-width="2"/></svg>
<svg style="left:1405px;top:511px" width="16" height="16" viewBox="0 0 16 16"><path d="M5 6H1V15H15V6H11" fill="none" stroke="#6e6e6e" stroke-width="2"/><path d="M8 2V11" stroke="#6e6e6e" stroke-width="2"/><path d="M4.6 3.8L8 0L11.4 3.8Z" fill="#6e6e6e"/></svg><svg style="left:1428px;top:511px" width="14" height="16" viewBox="0 0 14 16"><path d="M0.3 5L5.5 0V2.8C11 2.8 14 6 14 9.5C14 12.5 12 15 8.2 15.8C10 13.5 10.4 11 10 9.6C9.5 8 8 7.4 5.5 7.4V10Z" fill="#c3c3c3"/></svg><svg style="left:1449px;top:511px" width="16" height="16" viewBox="0 0 16 16"><path d="M0 1H13M0 5H6M0 9H5" stroke="#6e6e6e" stroke-width="2"/><circle cx="11.5" cy="8.5" r="3.4" fill="none" stroke="#6e6e6e" stroke-width="2"/><path d="M9 11L4.5 15.5" stroke="#6e6e6e" stroke-width="2.4"/></svg><svg style="left:1472px;top:512px" width="14" height="14" viewBox="0 0 14 14"><path d="M0 0H5L0 5Z" fill="#6e6e6e"/><path d="M1.5 1.5L4.4 4.4" stroke="#6e6e6e" stroke-width="2"/><path d="M14 0H9L14 5Z" fill="#6e6e6e"/><path d="M12.5 1.5L9.6 4.4" stroke="#6e6e6e" stroke-width="2"/><path d="M0 14H5L0 9Z" fill="#6e6e6e"/><path d="M1.5 12.5L4.4 9.6" stroke="#6e6e6e" stroke-width="2"/><path d="M14 14H9L14 9Z" fill="#6e6e6e"/><path d="M12.5 12.5L9.6 9.6" stroke="#6e6e6e" stroke-width="2"/></svg>
<svg class="ax" style="left:0;top:0" width="1500" height="952" viewBox="0 0 1500 952"><rect x="465.5" y="270.5" width="451" height="182" fill="#fff" stroke="#cdcdcd"/><path d="M460 452.5H465" stroke="#b9b9b9"/><text x="453.5" y="456.1" text-anchor="end" font-size="11" fill="#404040" >0</text><path d="M465 408.5H916" stroke="#cdcdcd"/><path d="M460 408.5H465" stroke="#b9b9b9"/><text x="453.5" y="412.1" text-anchor="end" font-size="11" fill="#404040" >200</text><path d="M465 364.5H916" stroke="#cdcdcd"/><path d="M460 364.5H465" stroke="#b9b9b9"/><text x="453.5" y="368.1" text-anchor="end" font-size="11" fill="#404040" >400</text><path d="M465 320.5H916" stroke="#cdcdcd"/><path d="M460 320.5H465" stroke="#b9b9b9"/><text x="453.5" y="324.1" text-anchor="end" font-size="11" fill="#404040" >600</text><path d="M465 276.5H916" stroke="#cdcdcd"/><path d="M460 276.5H465" stroke="#b9b9b9"/><text x="453.5" y="280.1" text-anchor="end" font-size="11" fill="#404040" >800</text><path d="M462.5 437.5H465" stroke="#cdcdcd"/><path d="M462.5 423.5H465" stroke="#cdcdcd"/><path d="M462.5 408.5H465" stroke="#cdcdcd"/><path d="M462.5 393.5H465" stroke="#cdcdcd"/><path d="M462.5 379.5H465" stroke="#cdcdcd"/><path d="M462.5 364.5H465" stroke="#cdcdcd"/><path d="M462.5 349.5H465" stroke="#cdcdcd"/><path d="M462.5 335.5H465" stroke="#cdcdcd"/><path d="M462.5 320.5H465" stroke="#cdcdcd"/><path d="M462.5 305.5H465" stroke="#cdcdcd"/><path d="M462.5 291.5H465" stroke="#cdcdcd"/><path d="M462.5 276.5H465" stroke="#cdcdcd"/><path d="M484.5 452V458" stroke="#b9b9b9"/><text x="485" y="472" text-anchor="middle" font-size="11" fill="#404040" >January</text><path d="M559.5 452V458" stroke="#b9b9b9"/><text x="560.12" y="472" text-anchor="middle" font-size="11" fill="#404040" >March</text><path d="M634.5 452V458" stroke="#b9b9b9"/><text x="635.24" y="472" text-anchor="middle" font-size="11" fill="#404040" >May</text><path d="M709.5 452V458" stroke="#b9b9b9"/><text x="710.36" y="472" text-anchor="middle" font-size="11" fill="#404040" >July</text><path d="M784.5 452V458" stroke="#b9b9b9"/><text x="785.48" y="472" text-anchor="middle" font-size="11" fill="#404040" >September</text><path d="M860.5 452V458" stroke="#b9b9b9"/><text x="860.6" y="472" text-anchor="middle" font-size="11" fill="#404040" >November</text><path d="M469.5 452V455" stroke="#cdcdcd"/><path d="M499.5 452V455" stroke="#cdcdcd"/><path d="M514.5 452V455" stroke="#cdcdcd"/><path d="M529.5 452V455" stroke="#cdcdcd"/><path d="M544.5 452V455" stroke="#cdcdcd"/><path d="M574.5 452V455" stroke="#cdcdcd"/><path d="M589.5 452V455" stroke="#cdcdcd"/><path d="M604.5 452V455" stroke="#cdcdcd"/><path d="M619.5 452V455" stroke="#cdcdcd"/><path d="M649.5 452V455" stroke="#cdcdcd"/><path d="M664.5 452V455" stroke="#cdcdcd"/><path d="M679.5 452V455" stroke="#cdcdcd"/><path d="M694.5 452V455" stroke="#cdcdcd"/><path d="M724.5 452V455" stroke="#cdcdcd"/><path d="M739.5 452V455" stroke="#cdcdcd"/><path d="M754.5 452V455" stroke="#cdcdcd"/><path d="M769.5 452V455" stroke="#cdcdcd"/><path d="M800.5 452V455" stroke="#cdcdcd"/><path d="M815.5 452V455" stroke="#cdcdcd"/><path d="M830.5 452V455" stroke="#cdcdcd"/><path d="M845.5 452V455" stroke="#cdcdcd"/><path d="M875.5 452V455" stroke="#cdcdcd"/><path d="M890.5 452V455" stroke="#cdcdcd"/><path d="M905.5 452V455" stroke="#cdcdcd"/><polyline points="484.5,313.8 522.1,325.3 559.6,312.5 597.2,319.1 634.7,325.9 672.3,383.4 709.9,393.5 747.4,401.6 785.0,317.4 822.5,325.5 860.1,344.6 897.7,339.1" fill="none" stroke="#5f8b95" stroke-width="2" stroke-dasharray="2 2"/><polyline points="484.5,287.4 522.1,299.5 559.6,291.6 597.2,287.0 634.7,297.1 672.3,362.2 709.9,370.6 747.4,368.6 785.0,289.0 822.5,295.8 860.1,347.3" fill="none" stroke="#ba4d51" stroke-width="2" stroke-linejoin="round"/><rect x="706.5" y="235.5" width="17" height="13" fill="#5f8b95" stroke="#4d717a"/><text x="729" y="246" text-anchor="start" font-size="11" fill="#404040" textLength="73" lengthAdjust="spacing" >2019 - Opened</text><rect x="809.5" y="235.5" width="17" height="13" fill="#ba4d51" stroke="#9a3f43"/><text x="832" y="246" text-anchor="start" font-size="11" fill="#404040" textLength="73" lengthAdjust="spacing" >2020 - Opened</text><rect x="1003.5" y="270.5" width="457" height="182" fill="#fff" stroke="#cdcdcd"/><path d="M998 452.5H1003" stroke="#b9b9b9"/><text x="991.5" y="456.1" text-anchor="end" font-size="11" fill="#404040" >0</text><path d="M1003 420.5H1460" stroke="#cdcdcd"/><path d="M998 420.5H1003" stroke="#b9b9b9"/><text x="991.5" y="424.1" text-anchor="end" font-size="11" fill="#404040" >3</text><path d="M1003 388.5H1460" stroke="#cdcdcd"/><path d="M998 388.5H1003" stroke="#b9b9b9"/><text x="991.5" y="392.1" text-anchor="end" font-size="11" fill="#404040" >6</text><path d="M1003 356.5H1460" stroke="#cdcdcd"/><path d="M998 356.5H1003" stroke="#b9b9b9"/><text x="991.5" y="360.1" text-anchor="end" font-size="11" fill="#404040" >9</text><path d="M1003 323.5H1460" stroke="#cdcdcd"/><path d="M998 323.5H1003" stroke="#b9b9b9"/><text x="991.5" y="327.1" text-anchor="end" font-size="11" fill="#404040" >12</text><path d="M1003 291.5H1460" stroke="#cdcdcd"/><path d="M998 291.5H1003" stroke="#b9b9b9"/><text x="991.5" y="295.1" text-anchor="end" font-size="11" fill="#404040" >15</text><path d="M1000.5 441.5H1003" stroke="#cdcdcd"/><path d="M1000.5 431.5H1003" stroke="#cdcdcd"/><path d="M1000.5 409.5H1003" stroke="#cdcdcd"/><path d="M1000.5 398.5H1003" stroke="#cdcdcd"/><path d="M1000.5 377.5H1003" stroke="#cdcdcd"/><path d="M1000.5 366.5H1003" stroke="#cdcdcd"/><path d="M1000.5 345.5H1003" stroke="#cdcdcd"/><path d="M1000.5 334.5H1003" stroke="#cdcdcd"/><path d="M1000.5 313.5H1003" stroke="#cdcdcd"/><path d="M1000.5 302.5H1003" stroke="#cdcdcd"/><path d="M1000.5 280.5H1003" stroke="#cdcdcd"/><path d="M1022.5 452V458" stroke="#b9b9b9"/><text x="1023.1" y="472" text-anchor="middle" font-size="11" fill="#404040" >January</text><path d="M1098.5 452V458" stroke="#b9b9b9"/><text x="1099.24" y="472" text-anchor="middle" font-size="11" fill="#404040" >March</text><path d="M1174.5 452V458" stroke="#b9b9b9"/><text x="1175.38" y="472" text-anchor="middle" font-size="11" fill="#404040" >May</text><path d="M1251.5 452V458" stroke="#b9b9b9"/><text x="1251.52" y="472" text-anchor="middle" font-size="11" fill="#404040" >July</text><path d="M1327.5 452V458" stroke="#b9b9b9"/><text x="1327.66" y="472" text-anchor="middle" font-size="11" fill="#404040" >September</text><path d="M1403.5 452V458" stroke="#b9b9b9"/><text x="1403.8" y="472" text-anchor="middle" font-size="11" fill="#404040" >November</text><path d="M1007.5 452V455" stroke="#cdcdcd"/><path d="M1037.5 452V455" stroke="#cdcdcd"/><path d="M1053.5 452V455" stroke="#cdcdcd"/><path d="M1068.5 452V455" stroke="#cdcdcd"/><path d="M1083.5 452V455" stroke="#cdcdcd"/><path d="M1113.5 452V455" stroke="#cdcdcd"/><path d="M1129.5 452V455" stroke="#cdcdcd"/><path d="M1144.5 452V455" stroke="#cdcdcd"/><path d="M1159.5 452V455" stroke="#cdcdcd"/><path d="M1190.5 452V455" stroke="#cdcdcd"/><path d="M1205.5 452V455" stroke="#cdcdcd"/><path d="M1220.5 452V455" stroke="#cdcdcd"/><path d="M1235.5 452V455" stroke="#cdcdcd"/><path d="M1266.5 452V455" stroke="#cdcdcd"/><path d="M1281.5 452V455" stroke="#cdcdcd"/><path d="M1296.5 452V455" stroke="#cdcdcd"/><path d="M1311.5 452V455" stroke="#cdcdcd"/><path d="M1342.5 452V455" stroke="#cdcdcd"/><path d="M1357.5 452V455" stroke="#cdcdcd"/><path d="M1372.5 452V455" stroke="#cdcdcd"/><path d="M1388.5 452V455" stroke="#cdcdcd"/><path d="M1418.5 452V455" stroke="#cdcdcd"/><path d="M1433.5 452V455" stroke="#cdcdcd"/><path d="M1448.5 452V455" stroke="#cdcdcd"/><polyline points="1022.6,294.6 1060.7,299.2 1098.7,297.3 1136.8,288.6 1174.9,313.2 1213.0,289.7 1251.0,300.8 1289.1,286.7 1327.2,324.9 1365.2,301.4 1403.3,328.7 1441.4,294.6" fill="none" stroke="#5f8b95" stroke-width="2" stroke-dasharray="2 2"/><polyline points="1022.6,301.2 1060.7,307.7 1098.7,311.0 1136.8,300.6 1174.9,318.4 1213.0,301.4 1251.0,306.4 1289.1,303.1 1327.2,342.4 1365.2,305.0 1403.3,338.6" fill="none" stroke="#ba4d51" stroke-width="2" stroke-linejoin="round"/><rect x="1072.5" y="235.5" width="17" height="13" fill="#5f8b95" stroke="#4d717a"/><text x="1095.7" y="246" text-anchor="start" font-size="11" fill="#404040" textLength="161.3" lengthAdjust="spacing" >2019 - Response Time (Average)</text><rect x="1264.5" y="235.5" width="17" height="13" fill="#ba4d51" stroke="#9a3f43"/><text x="1287.3" y="246" text-anchor="start" font-size="11" fill="#404040" textLength="161.8" lengthAdjust="spacing" >2020 - Response Time (Average)</text><rect x="522.5" y="550.5" width="395" height="344" fill="#fff" stroke="#cdcdcd"/><path d="M522.5 894V900" stroke="#b9b9b9"/><text x="522.5" y="914" text-anchor="middle" font-size="11" fill="#404040" >0</text><path d="M540.5 894V897" stroke="#cdcdcd"/><path d="M557.5 894V897" stroke="#cdcdcd"/><path d="M574.5 550V894" stroke="#cdcdcd"/><path d="M574.5 894V900" stroke="#b9b9b9"/><text x="574.5" y="914" text-anchor="middle" font-size="11" fill="#404040" >500</text><path d="M592.5 894V897" stroke="#cdcdcd"/><path d="M609.5 894V897" stroke="#cdcdcd"/><path d="M627.5 550V894" stroke="#cdcdcd"/><path d="M627.5 894V900" stroke="#b9b9b9"/><text x="627.5" y="914" text-anchor="middle" font-size="11" fill="#404040" >1,000</text><path d="M644.5 894V897" stroke="#cdcdcd"/><path d="M661.5 894V897" stroke="#cdcdcd"/><path d="M679.5 550V894" stroke="#cdcdcd"/><path d="M679.5 894V900" stroke="#b9b9b9"/><text x="679.5" y="914" text-anchor="middle" font-size="11" fill="#404040" >1,500</text><path d="M696.5 894V897" stroke="#cdcdcd"/><path d="M714.5 894V897" stroke="#cdcdcd"/><path d="M731.5 550V894" stroke="#cdcdcd"/><path d="M731.5 894V900" stroke="#b9b9b9"/><text x="731.5" y="914" text-anchor="middle" font-size="11" fill="#404040" >2,000</text><path d="M749.5 894V897" stroke="#cdcdcd"/><path d="M766.5 894V897" stroke="#cdcdcd"/><path d="M783.5 550V894" stroke="#cdcdcd"/><path d="M783.5 894V900" stroke="#b9b9b9"/><text x="783.5" y="914" text-anchor="middle" font-size="11" fill="#404040" >2,500</text><path d="M801.5 894V897" stroke="#cdcdcd"/><path d="M818.5 894V897" stroke="#cdcdcd"/><path d="M836.5 550V894" stroke="#cdcdcd"/><path d="M836.5 894V900" stroke="#b9b9b9"/><text x="836.5" y="914" text-anchor="middle" font-size="11" fill="#404040" >3,000</text><path d="M853.5 894V897" stroke="#cdcdcd"/><path d="M870.5 894V897" stroke="#cdcdcd"/><path d="M888.5 550V894" stroke="#cdcdcd"/><path d="M888.5 894V900" stroke="#b9b9b9"/><text x="888.5" y="914" text-anchor="middle" font-size="11" fill="#404040" >3,500</text><path d="M905.5 894V897" stroke="#cdcdcd"/><path d="M517 579.5H522" stroke="#b9b9b9"/><path d="M519 556.5H522" stroke="#cdcdcd"/><path d="M519 567.5H522" stroke="#cdcdcd"/><path d="M519 590.5H522" stroke="#cdcdcd"/><path d="M519 602.5H522" stroke="#cdcdcd"/><text x="511.5" y="582.667" text-anchor="end" font-size="11" fill="#404040" textLength="68.5" lengthAdjust="spacing" >ASP.NET Core</text><rect x="523" y="561" width="19" height="35" fill="#cf5060" /><rect x="542" y="561" width="56" height="35" fill="#febe60" /><rect x="598" y="561" width="283" height="35" fill="#d3e4fb" /><rect x="520.5" y="571.5" width="23" height="15" fill="#fff" stroke="#b84356"/><text x="532" y="583" text-anchor="middle" font-size="11" fill="#b9445a" >187</text><rect x="558.5" y="571.5" width="23" height="15" fill="#fff" stroke="#e0a24f"/><text x="570" y="583" text-anchor="middle" font-size="11" fill="#e2a04a" >543</text><rect x="723.5" y="571.5" width="32" height="15" fill="#fff" stroke="#b1c1d9"/><text x="739.5" y="583" text-anchor="middle" font-size="11" fill="#a6b6cf" >2,703</text><path d="M517 636.5H522" stroke="#b9b9b9"/><path d="M519 613.5H522" stroke="#cdcdcd"/><path d="M519 625.5H522" stroke="#cdcdcd"/><path d="M519 647.5H522" stroke="#cdcdcd"/><path d="M519 659.5H522" stroke="#cdcdcd"/><text x="511.5" y="640" text-anchor="end" font-size="11" fill="#404040" textLength="68" lengthAdjust="spacing" >ASP.NET MVC</text><rect x="523" y="619" width="21" height="34" fill="#cf5060" /><rect x="544" y="619" width="61" height="34" fill="#febe60" /><rect x="605" y="619" width="271" height="34" fill="#d3e4fb" /><rect x="521.5" y="628.5" width="23" height="15" fill="#fff" stroke="#b84356"/><text x="533" y="640" text-anchor="middle" font-size="11" fill="#b9445a" >211</text><rect x="563.5" y="628.5" width="23" height="15" fill="#fff" stroke="#e0a24f"/><text x="575" y="640" text-anchor="middle" font-size="11" fill="#e2a04a" >579</text><rect x="724.5" y="628.5" width="32" height="15" fill="#fff" stroke="#b1c1d9"/><text x="740.5" y="640" text-anchor="middle" font-size="11" fill="#a6b6cf" >2,592</text><path d="M517 693.5H522" stroke="#b9b9b9"/><path d="M519 670.5H522" stroke="#cdcdcd"/><path d="M519 682.5H522" stroke="#cdcdcd"/><path d="M519 705.5H522" stroke="#cdcdcd"/><path d="M519 716.5H522" stroke="#cdcdcd"/><text x="511.5" y="697.333" text-anchor="end" font-size="11" fill="#404040" textLength="74.3" lengthAdjust="spacing" >Xamarin.Forms</text><rect x="523" y="676" width="26" height="35" fill="#cf5060" /><rect x="549" y="676" width="57" height="35" fill="#febe60" /><rect x="606" y="676" width="179" height="35" fill="#d3e4fb" /><rect x="524.5" y="685.5" width="23" height="15" fill="#fff" stroke="#b84356"/><text x="536" y="697" text-anchor="middle" font-size="11" fill="#b9445a" >260</text><rect x="566.5" y="685.5" width="23" height="15" fill="#fff" stroke="#e0a24f"/><text x="578" y="697" text-anchor="middle" font-size="11" fill="#e2a04a" >542</text><rect x="679.5" y="685.5" width="32" height="15" fill="#fff" stroke="#b1c1d9"/><text x="695.5" y="697" text-anchor="middle" font-size="11" fill="#a6b6cf" >1,713</text><path d="M517 751.5H522" stroke="#b9b9b9"/><path d="M519 728.5H522" stroke="#cdcdcd"/><path d="M519 739.5H522" stroke="#cdcdcd"/><path d="M519 762.5H522" stroke="#cdcdcd"/><path d="M519 774.5H522" stroke="#cdcdcd"/><text x="511.5" y="754.667" text-anchor="end" font-size="11" fill="#404040" textLength="50" lengthAdjust="spacing" >WinForms</text><rect x="523" y="733" width="10" height="35" fill="#cf5060" /><rect x="533" y="733" width="29" height="35" fill="#febe60" /><rect x="562" y="733" width="140" height="35" fill="#d3e4fb" /><rect x="516.5" y="743.5" width="23" height="15" fill="#fff" stroke="#b84356"/><text x="528" y="755" text-anchor="middle" font-size="11" fill="#b9445a" >104</text><rect x="616.5" y="743.5" width="32" height="15" fill="#fff" stroke="#b1c1d9"/><text x="632.5" y="755" text-anchor="middle" font-size="11" fill="#a6b6cf" >1,344</text><path d="M517 808.5H522" stroke="#b9b9b9"/><path d="M519 785.5H522" stroke="#cdcdcd"/><path d="M519 797.5H522" stroke="#cdcdcd"/><path d="M519 819.5H522" stroke="#cdcdcd"/><path d="M519 831.5H522" stroke="#cdcdcd"/><text x="511.5" y="812" text-anchor="end" font-size="11" fill="#404040" textLength="32" lengthAdjust="spacing" >Blazor</text><rect x="523" y="791" width="10" height="34" fill="#cf5060" /><rect x="533" y="791" width="16" height="34" fill="#febe60" /><rect x="549" y="791" width="67" height="34" fill="#d3e4fb" /><rect x="516.5" y="800.5" width="23" height="15" fill="#fff" stroke="#b84356"/><text x="528" y="812" text-anchor="middle" font-size="11" fill="#b9445a" >101</text><rect x="571.5" y="800.5" width="23" height="15" fill="#fff" stroke="#b1c1d9"/><text x="583" y="812" text-anchor="middle" font-size="11" fill="#a6b6cf" >641</text><path d="M517 865.5H522" stroke="#b9b9b9"/><path d="M519 842.5H522" stroke="#cdcdcd"/><path d="M519 854.5H522" stroke="#cdcdcd"/><path d="M519 877.5H522" stroke="#cdcdcd"/><path d="M519 888.5H522" stroke="#cdcdcd"/><text x="511.5" y="869.333" text-anchor="end" font-size="11" fill="#404040" textLength="21.8" lengthAdjust="spacing" >WPF</text><rect x="523" y="848" width="9" height="35" fill="#cf5060" /><rect x="532" y="848" width="12" height="35" fill="#febe60" /><rect x="544" y="848" width="62" height="35" fill="#d3e4fb" /><rect x="518.5" y="857.5" width="17" height="15" fill="#fff" stroke="#b84356"/><text x="527" y="869" text-anchor="middle" font-size="11" fill="#b9445a" >93</text><rect x="564.5" y="857.5" width="23" height="15" fill="#fff" stroke="#b1c1d9"/><text x="576" y="869" text-anchor="middle" font-size="11" fill="#a6b6cf" >598</text><rect x="1029.5" y="550.5" width="431" height="329" fill="#fff" stroke="#cdcdcd"/><path d="M1024 879.5H1029" stroke="#b9b9b9"/><text x="1018" y="883.1" text-anchor="end" font-size="11" fill="#404040" >0</text><path d="M1029 841.5H1460" stroke="#cdcdcd"/><path d="M1024 841.5H1029" stroke="#b9b9b9"/><text x="1018" y="845.1" text-anchor="end" font-size="11" fill="#404040" >2</text><path d="M1029 803.5H1460" stroke="#cdcdcd"/><path d="M1024 803.5H1029" stroke="#b9b9b9"/><text x="1018" y="807.1" text-anchor="end" font-size="11" fill="#404040" >4</text><path d="M1029 764.5H1460" stroke="#cdcdcd"/><path d="M1024 764.5H1029" stroke="#b9b9b9"/><text x="1018" y="768.1" text-anchor="end" font-size="11" fill="#404040" >6</text><path d="M1029 726.5H1460" stroke="#cdcdcd"/><path d="M1024 726.5H1029" stroke="#b9b9b9"/><text x="1018" y="730.1" text-anchor="end" font-size="11" fill="#404040" >8</text><path d="M1029 688.5H1460" stroke="#cdcdcd"/><path d="M1024 688.5H1029" stroke="#b9b9b9"/><text x="1018" y="692.1" text-anchor="end" font-size="11" fill="#404040" >10</text><path d="M1029 650.5H1460" stroke="#cdcdcd"/><path d="M1024 650.5H1029" stroke="#b9b9b9"/><text x="1018" y="654.1" text-anchor="end" font-size="11" fill="#404040" >12</text><path d="M1029 612.5H1460" stroke="#cdcdcd"/><path d="M1024 612.5H1029" stroke="#b9b9b9"/><text x="1018" y="616.1" text-anchor="end" font-size="11" fill="#404040" >14</text><path d="M1029 573.5H1460" stroke="#cdcdcd"/><path d="M1024 573.5H1029" stroke="#b9b9b9"/><text x="1018" y="577.1" text-anchor="end" font-size="11" fill="#404040" >16</text><path d="M1026.5 866.5H1029" stroke="#cdcdcd"/><path d="M1026.5 854.5H1029" stroke="#cdcdcd"/><path d="M1026.5 828.5H1029" stroke="#cdcdcd"/><path d="M1026.5 815.5H1029" stroke="#cdcdcd"/><path d="M1026.5 790.5H1029" stroke="#cdcdcd"/><path d="M1026.5 777.5H1029" stroke="#cdcdcd"/><path d="M1026.5 752.5H1029" stroke="#cdcdcd"/><path d="M1026.5 739.5H1029" stroke="#cdcdcd"/><path d="M1026.5 713.5H1029" stroke="#cdcdcd"/><path d="M1026.5 701.5H1029" stroke="#cdcdcd"/><path d="M1026.5 675.5H1029" stroke="#cdcdcd"/><path d="M1026.5 663.5H1029" stroke="#cdcdcd"/><path d="M1026.5 637.5H1029" stroke="#cdcdcd"/><path d="M1026.5 624.5H1029" stroke="#cdcdcd"/><path d="M1026.5 599.5H1029" stroke="#cdcdcd"/><path d="M1026.5 586.5H1029" stroke="#cdcdcd"/><path d="M1026.5 561.5H1029" stroke="#cdcdcd"/><path d="M1065.5 879V885" stroke="#b9b9b9"/><path d="M1037.5 879V882" stroke="#cdcdcd"/><path d="M1051.5 879V882" stroke="#cdcdcd"/><path d="M1080.5 879V882" stroke="#cdcdcd"/><path d="M1094.5 879V882" stroke="#cdcdcd"/><rect x="1042" y="764" width="15" height="115" fill="#cf5060" /><rect x="1058" y="717" width="14" height="162" fill="#febe60" /><rect x="1073" y="594" width="14" height="285" fill="#d3e4fb" /><text x="1065.4" y="913.6" text-anchor="middle" font-size="11" fill="#404040" textLength="74.3" lengthAdjust="spacing" >Xamarin.Forms</text><path d="M1137.5 879V885" stroke="#b9b9b9"/><path d="M1109.5 879V882" stroke="#cdcdcd"/><path d="M1123.5 879V882" stroke="#cdcdcd"/><path d="M1152.5 879V882" stroke="#cdcdcd"/><path d="M1166.5 879V882" stroke="#cdcdcd"/><rect x="1114" y="749" width="15" height="130" fill="#cf5060" /><rect x="1130" y="694" width="14" height="185" fill="#febe60" /><rect x="1145" y="602" width="14" height="277" fill="#d3e4fb" /><text x="1137.4" y="898.6" text-anchor="middle" font-size="11" fill="#404040" textLength="21.8" lengthAdjust="spacing" >WPF</text><path d="M1209.5 879V885" stroke="#b9b9b9"/><path d="M1181.5 879V882" stroke="#cdcdcd"/><path d="M1195.5 879V882" stroke="#cdcdcd"/><path d="M1224.5 879V882" stroke="#cdcdcd"/><path d="M1238.5 879V882" stroke="#cdcdcd"/><rect x="1186" y="760" width="14" height="119" fill="#cf5060" /><rect x="1201" y="707" width="15" height="172" fill="#febe60" /><rect x="1217" y="590" width="14" height="289" fill="#d3e4fb" /><text x="1209.4" y="913.6" text-anchor="middle" font-size="11" fill="#404040" textLength="50" lengthAdjust="spacing" >WinForms</text><path d="M1281.5 879V885" stroke="#b9b9b9"/><path d="M1253.5 879V882" stroke="#cdcdcd"/><path d="M1267.5 879V882" stroke="#cdcdcd"/><path d="M1296.5 879V882" stroke="#cdcdcd"/><path d="M1310.5 879V882" stroke="#cdcdcd"/><rect x="1258" y="772" width="14" height="107" fill="#cf5060" /><rect x="1273" y="717" width="15" height="162" fill="#febe60" /><rect x="1289" y="590" width="14" height="289" fill="#d3e4fb" /><text x="1281.4" y="898.6" text-anchor="middle" font-size="11" fill="#404040" textLength="32" lengthAdjust="spacing" >Blazor</text><path d="M1353.5 879V885" stroke="#b9b9b9"/><path d="M1325.5 879V882" stroke="#cdcdcd"/><path d="M1339.5 879V882" stroke="#cdcdcd"/><path d="M1368.5 879V882" stroke="#cdcdcd"/><path d="M1382.5 879V882" stroke="#cdcdcd"/><rect x="1330" y="741" width="14" height="138" fill="#cf5060" /><rect x="1345" y="697" width="14" height="182" fill="#febe60" /><rect x="1360" y="580" width="15" height="299" fill="#d3e4fb" /><text x="1353.4" y="913.6" text-anchor="middle" font-size="11" fill="#404040" textLength="68" lengthAdjust="spacing" >ASP.NET MVC</text><path d="M1425.5 879V885" stroke="#b9b9b9"/><path d="M1397.5 879V882" stroke="#cdcdcd"/><path d="M1411.5 879V882" stroke="#cdcdcd"/><path d="M1440.5 879V882" stroke="#cdcdcd"/><path d="M1454.5 879V882" stroke="#cdcdcd"/><rect x="1402" y="751" width="14" height="128" fill="#cf5060" /><rect x="1417" y="706" width="14" height="173" fill="#febe60" /><rect x="1432" y="589" width="15" height="290" fill="#d3e4fb" /><text x="1425.4" y="898.6" text-anchor="middle" font-size="11" fill="#404040" textLength="68.5" lengthAdjust="spacing" >ASP.NET Core</text><text transform="translate(996,716) rotate(-90)" text-anchor="middle" font-size="16" fill="#404040" textLength="159">Response Time, Hours</text></svg>
</body></html>
